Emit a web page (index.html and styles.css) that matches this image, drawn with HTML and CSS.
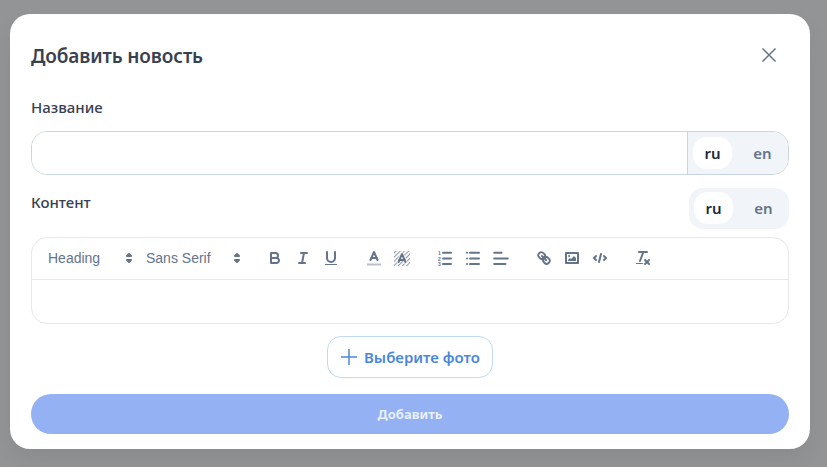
FILE: index.html
```html
<!DOCTYPE html>
<html lang="ru">

<head>
    <meta charset="UTF-8">
    <meta name="viewport" content="width=device-width, initial-scale=1.0">
    <title>Добавить новость</title>
    <link rel="stylesheet" href="styles.css">
</head>

<body>
    <div class="overlay">
        <form class="modal">
            <div class="modal-head">
                <h2>Добавить новость</h2>
                <button type="button" class="close">
                    <svg viewBox="0 0 16 16" width="16" height="16"><path d="M1.5 1.5l13 13M14.5 1.5l-13 13" /></svg>
                </button>
            </div>

            <label class="label label-name">Название</label>
            <div class="input-row">
                <input type="text" class="text-input">
                <div class="lang lang-attached">
                    <button type="button" class="on">ru</button>
                    <button type="button">en</button>
                </div>
            </div>

            <div class="content-head">
                <label class="label">Контент</label>
                <div class="lang">
                    <button type="button" class="on">ru</button>
                    <button type="button">en</button>
                </div>
            </div>

            <div class="editor">
                <div class="toolbar">
                    <span class="picker picker-heading">Heading
                        <svg viewBox="0 0 18 18"><polygon points="7 11 9 13 11 11 7 11" /><polygon points="7 7 9 5 11 7 7 7" /></svg>
                    </span>
                    <span class="picker picker-font">Sans Serif
                        <svg viewBox="0 0 18 18"><polygon points="7 11 9 13 11 11 7 11" /><polygon points="7 7 9 5 11 7 7 7" /></svg>
                    </span>

                    <span class="group">
                        <button type="button"><svg viewBox="0 0 18 18"><path d="M5,4H9.5A2.5,2.5,0,0,1,12,6.5v0A2.5,2.5,0,0,1,9.5,9H5V4Z" /><path d="M5,9h5.5A2.5,2.5,0,0,1,13,11.5v0A2.5,2.5,0,0,1,10.5,14H5V9Z" /></svg></button>
                        <button type="button"><svg viewBox="0 0 18 18"><line x1="7" x2="13" y1="4" y2="4" /><line x1="5" x2="11" y1="14" y2="14" /><line x1="8" x2="10" y1="14" y2="4" /></svg></button>
                        <button type="button"><svg viewBox="0 0 18 18"><path d="M5,3V9a4.012,4.012,0,0,0,4,4H9a4.012,4.012,0,0,0,4-4V3" /><rect class="fill" height="1" rx=".5" ry=".5" width="12" x="3" y="15" /></svg></button>
                    </span>

                    <span class="group">
                        <button type="button"><svg viewBox="0 0 18 18"><line class="color-label" x1="3" x2="15" y1="15.5" y2="15.5" /><polyline points="5.5 11 9 3 12.5 11" /><line x1="11.63" x2="6.38" y1="9" y2="9" /></svg></button>
                        <button type="button"><svg viewBox="0 0 18 18">
                            <defs><pattern id="hatch" width="3" height="3" patternUnits="userSpaceOnUse" patternTransform="rotate(45)"><rect class="hatch-line" width="1.1" height="3" /></pattern></defs>
                            <rect class="hatch" x="1" y="2" width="16" height="15" />
                            <polyline class="halo" points="5.5 13 9 5 12.5 13" />
                            <polyline points="5.5 13 9 5 12.5 13" /><line x1="11.63" x2="6.38" y1="11" y2="11" />
                        </svg></button>
                    </span>

                    <span class="group">
                        <button type="button"><svg viewBox="0 0 18 18"><line x1="7" x2="15" y1="3.8" y2="3.8" /><line x1="7" x2="15" y1="9.5" y2="9.5" /><line x1="7" x2="15" y1="15" y2="15" /><text x="2" y="6">1</text><text x="2" y="11.5">2</text><text x="2" y="17">3</text></svg></button>
                        <button type="button"><svg viewBox="0 0 18 18"><line x1="6" x2="15" y1="3.8" y2="3.8" /><line x1="6" x2="15" y1="9.5" y2="9.5" /><line x1="6" x2="15" y1="15" y2="15" /><line x1="3" x2="3" y1="3.8" y2="3.8" /><line x1="3" x2="3" y1="9.5" y2="9.5" /><line x1="3" x2="3" y1="15" y2="15" /></svg></button>
                        <button type="button"><svg viewBox="0 0 18 18"><line x1="2.2" x2="15.8" y1="9.5" y2="9.5" /><line x1="2.2" x2="13.5" y1="15" y2="15" /><line x1="2.2" x2="9.5" y1="3.8" y2="3.8" /></svg></button>
                    </span>

                    <span class="group">
                        <button type="button"><svg viewBox="0 0 18 18"><line x1="7" x2="11" y1="7" y2="11" /><path d="M8.9,4.577a3.476,3.476,0,0,1,.36,4.679A3.476,3.476,0,0,1,4.577,8.9C3.185,7.5,2.035,6.4,4.217,4.217S7.5,3.185,8.9,4.577Z" /><path d="M13.423,9.1a3.476,3.476,0,0,0-4.679-.36,3.476,3.476,0,0,0,.36,4.679c1.392,1.392,2.5,2.542,4.679.36S14.815,10.5,13.423,9.1Z" /></svg></button>
                        <button type="button"><svg viewBox="0 0 18 18"><rect height="10" width="12" x="3" y="4" /><circle class="fill" cx="6" cy="7" r="1" /><polygon class="fill" points="5 12 5 11 7 9 8 10 11 7 13 9 13 12 5 12" /></svg></button>
                        <button type="button"><svg viewBox="0 0 18 18"><polyline points="5 7 3 9 5 11" /><polyline points="13 7 15 9 13 11" /><line x1="10" x2="8" y1="5" y2="13" /></svg></button>
                    </span>

                    <span class="group">
                        <button type="button"><svg viewBox="0 0 18 18"><line x1="5" x2="13" y1="3" y2="3" /><line x1="6" x2="9.35" y1="12" y2="3" /><line x1="11" x2="15" y1="11" y2="15" /><line x1="15" x2="11" y1="11" y2="15" /><rect class="fill" height="1" rx=".5" ry=".5" width="7" x="2" y="14" /></svg></button>
                    </span>
                </div>
                <div class="editor-body"></div>
            </div>

            <div class="photo-wrap">
                <button type="button" class="photo-btn">
                    <svg viewBox="0 0 16 16" width="16" height="16"><path d="M8 0v16M0 8h16" /></svg>
                    Выберите фото
                </button>
            </div>

            <button type="button" class="submit">Добавить</button>
        </form>
    </div>
</body>

</html>
```

FILE: styles.css
```css
* {
    margin: 0;
    padding: 0;
    box-sizing: border-box;
}

html,
body {
    height: 100%;
    overflow: hidden;
}

body {
    background-color: #939495;
    font-family: "Noto Sans", sans-serif;
}

button {
    border: 0;
    background: transparent;
    font-family: inherit;
}

.overlay {
    display: flex;
    align-items: flex-start;
    padding: 14px 17px 18px 10px;
}

.modal {
    width: 800px;
    height: 435px;
    padding: 0 21px;
    background-color: #fff;
    border-radius: 20px;
    box-shadow: 0 10px 20px rgba(0, 0, 0, 0.06);
}

.modal-head {
    display: flex;
    align-items: center;
    justify-content: space-between;
    height: 83px;
}

.modal-head h2 {
    font-size: 19px;
    font-weight: 600;
    letter-spacing: -0.12px;
    color: #374151;
}

.close {
    display: flex;
    margin-right: 12px;
    margin-bottom: 2px;
}

.close svg {
    fill: none;
    stroke: #64748b;
    stroke-width: 1.5;
}

.label {
    display: block;
    font-size: 15px;
    font-weight: 500;
    line-height: 20px;
    color: #374151;
}

.label-name {
    margin-bottom: 14px;
}

.input-row {
    display: flex;
    height: 44px;
    border: 1px solid #cbd5e1;
    border-radius: 16px;
    overflow: hidden;
}

.text-input {
    flex: 1;
    min-width: 0;
    border: 0;
    outline: 0;
}

.lang {
    display: flex;
    align-items: center;
    gap: 11px;
    width: 100px;
    height: 41px;
    padding: 0 5px 1px;
    background-color: #f1f5f9;
    border-radius: 14px;
}

.lang button {
    width: 39px;
    height: 32px;
    font-size: 15px;
    font-weight: 600;
    color: #64748b;
    border-radius: 14px;
}

.lang button.on {
    background-color: #fff;
    color: #1e293b;
}

.lang-attached {
    height: 100%;
    width: 101px;
    padding-bottom: 0;
    border-left: 1px solid #cbd5e1;
    border-radius: 0;
}

.content-head {
    display: flex;
    align-items: flex-start;
    justify-content: space-between;
    margin-top: 13px;
    margin-bottom: 8px;
}

.content-head .label {
    margin-top: 4px;
}

.editor {
    height: 87px;
    border: 1px solid #e5e7eb;
    border-radius: 16px;
}

.toolbar {
    display: flex;
    align-items: center;
    height: 42px;
    padding: 0 8px 1px;
    border-bottom: 1px solid #e5e7eb;
    font-family: "Liberation Sans", Arial, sans-serif;
}

.picker {
    display: flex;
    align-items: center;
    justify-content: space-between;
    height: 24px;
    padding-left: 8px;
    padding-right: 0;
    font-size: 14px;
    font-weight: 500;
    color: #64748b;
}

.picker svg {
    width: 18px;
    height: 18px;
    fill: #64748b;
    stroke: #64748b;
    stroke-width: 2;
    stroke-linejoin: round;
}

.picker-heading {
    width: 98px;
}

.picker-font {
    width: 108px;
}

.group {
    display: flex;
    margin-left: 15px;
}

.group button {
    display: flex;
    width: 28px;
    height: 24px;
    padding: 3px 5px;
}

.group svg {
    width: 18px;
    height: 18px;
    fill: none;
    stroke: #64748b;
    stroke-width: 2;
    stroke-linecap: round;
    stroke-linejoin: round;
}

.group svg .fill {
    fill: #64748b;
    stroke: none;
}

.group svg .color-label {
    stroke: #b8c1cd;
    stroke-linecap: square;
}

.group svg .hatch {
    fill: url(#hatch);
    stroke: none;
}

.group svg .hatch-line {
    fill: #8f9bad;
    stroke: none;
}

.group svg .halo {
    stroke: #fff;
    stroke-width: 3.5;
}

.group svg text {
    font-size: 5px;
    font-weight: 700;
    fill: #64748b;
    stroke: none;
}

.photo-wrap {
    display: flex;
    justify-content: center;
    margin-top: 12px;
}

.photo-btn {
    display: flex;
    align-items: center;
    gap: 7px;
    height: 42px;
    width: 166px;
    padding-left: 13px;
    border: 1px solid #bfdbf0;
    border-radius: 14px;
    font-size: 15px;
    font-weight: 600;
    color: #4a86dc;
}

.photo-btn svg {
    fill: none;
    stroke: #4a86dc;
    stroke-width: 1.5;
}

.submit {
    display: block;
    width: 100%;
    height: 40px;
    margin-top: 16px;
    background-color: #93b1f3;
    border-radius: 20px;
    font-size: 13px;
    font-weight: 700;
    color: #e9effd;
}
```
